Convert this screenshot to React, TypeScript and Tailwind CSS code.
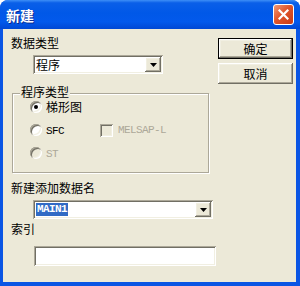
import type { ReactNode } from 'react';

const cjk = "font-['Noto_Sans_CJK_SC',sans-serif]";
const mono = "font-['Liberation_Mono',monospace] text-[11px] tracking-[-0.6px]";

const sunken =
  'shadow-[inset_1px_1px_0_#aca899,inset_-1px_-1px_0_#ffffff,inset_2px_2px_0_#716f64,inset_-2px_-2px_0_#f1efe2]';
const raised =
  'shadow-[inset_-1px_-1px_0_#716f64,inset_1px_1px_0_#ffffff,inset_-2px_-2px_0_#aca899,inset_2px_2px_0_#f1efe2]';

function ArrowButton() {
  return (
    <div className={`flex w-[16px] items-center justify-center bg-[#ece9d8] ${raised}`}>
      <svg width="7" height="4" viewBox="0 0 7 4">
        <path d="M0 0h7L3.5 4z" fill="#000" />
      </svg>
    </div>
  );
}

function Radio({ checked, disabled, children }: { checked?: boolean; disabled?: boolean; children: ReactNode }) {
  return (
    <div className="flex h-[16px] items-center">
      <div
        className={`flex h-[12px] w-[12px] items-center justify-center rounded-full ${
          disabled ? 'bg-[#ece9d8]' : 'bg-white'
        } ${sunken}`}
      >
        {checked && <div className="h-[4px] w-[4px] rounded-full bg-black" />}
      </div>
      <div className={`ml-[4px] ${disabled ? 'text-[#aca899]' : 'text-black'}`}>{children}</div>
    </div>
  );
}

function Button({ label, isDefault }: { label: string; isDefault?: boolean }) {
  return (
    <div className={`h-[21px] w-[75px] ${isDefault ? 'border border-black' : ''}`}>
      <div className={`flex h-full items-center justify-center bg-[#ece9d8] text-[12px] ${raised}`}>{label}</div>
    </div>
  );
}

export default function App() {
  return (
    <div className={`flex h-[286px] w-[300px] flex-col rounded-t-[8px] bg-[#0a55e4] ${cjk} text-[12px] leading-[14px] text-black`}>
      {/* title bar */}
      <div className="flex h-[29px] items-center rounded-t-[8px] bg-[linear-gradient(to_bottom,#3d8ff7_0%,#0a5fe8_10%,#0058e8_45%,#0259ec_75%,#0048d4_100%)] pl-[6px] pr-[6px]">
        <div className="text-[14px] font-bold text-white [text-shadow:1px_1px_0_#0b2a8f]">新建</div>
        <div className="ml-auto flex h-[21px] w-[21px] items-center justify-center rounded-[3px] border border-white bg-[linear-gradient(135deg,#f09a78_0%,#e0562c_45%,#c83a14_100%)]">
          <svg width="11" height="11" viewBox="0 0 11 11">
            <path d="M1.5 1.5l8 8M9.5 1.5l-8 8" stroke="#fff" strokeWidth="2.2" strokeLinecap="square" />
          </svg>
        </div>
      </div>

      {/* body */}
      <div className="mb-[4px] ml-[3px] mr-[4px] flex flex-1 bg-[#ece9d8]">
        <div className="flex flex-1 flex-col pl-[8px] pt-[7px]">
          <div>数据类型</div>
          <div className={`ml-[22px] mt-[5px] flex h-[19px] w-[130px] bg-white p-[2px] ${sunken}`}>
            <div className="flex-1 pl-[1px] leading-[15px]">程序</div>
            <ArrowButton />
          </div>

          <div className="relative ml-[1px] mt-[19px] h-[80px] w-[197px] border border-[#aca899] pl-[17px] pt-[5px] shadow-[inset_1px_1px_0_#fff,1px_1px_0_#fff]">
            <div className="absolute left-[7px] top-[-9px] bg-[#ece9d8] px-[1px]">程序类型</div>
            <div className="flex flex-col gap-[7px]">
              <Radio checked>梯形图</Radio>
              <div className="flex items-center">
                <div className="w-[70px]">
                  <Radio>
                    <span className={mono}>SFC</span>
                  </Radio>
                </div>
                <div className={`h-[13px] w-[13px] bg-[#ece9d8] ${sunken}`} />
                <span className={`ml-[5px] text-[#aca899] ${mono}`}>MELSAP-L</span>
              </div>
              <Radio disabled>
                <span className={mono}>ST</span>
              </Radio>
            </div>
          </div>

          <div className="mt-[8px]">新建添加数据名</div>
          <div className={`ml-[22px] mt-[5px] flex h-[19px] w-[180px] bg-white p-[2px] ${sunken}`}>
            <div className="flex flex-1 items-center pl-[1px]">
              <span className={`bg-[#316ac5] px-[1px] font-bold leading-[13px] text-white ${mono}`}>MAIN1</span>
            </div>
            <ArrowButton />
          </div>

          <div className="mt-[3px]">索引</div>
          <div className={`ml-[23px] mt-[10px] h-[20px] w-[182px] bg-white ${sunken}`} />
        </div>

        <div className="mr-[3px] flex w-[75px] flex-col gap-[4px] pt-[9px]">
          <Button label="确定" isDefault />
          <Button label="取消" />
        </div>
      </div>
    </div>
  );
}
